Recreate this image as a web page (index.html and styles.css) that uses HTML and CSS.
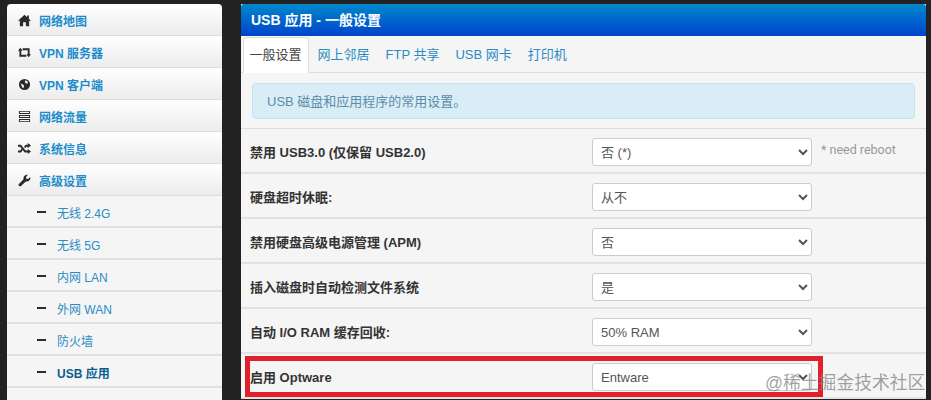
FILE: index.html
```html
<!DOCTYPE html>
<html lang="zh-CN">

<head>
    <meta charset="UTF-8">
    <title>USB 应用 - 一般设置</title>
    <link rel="stylesheet" href="styles.css">
</head>

<body>
    <div class="sidebar">
        <a class="nav-item" href="#">
            <svg class="nav-icon" viewBox="0 0 14 14"><path d="M7 .8 9.8 3.4V1.6h1.9v3.6L14 7.400H12V13.200H8.500V8.800H5.500V13.200H2V7.400H0Z" /></svg>
            网络地图
        </a>
        <a class="nav-item" href="#">
            <svg class="nav-icon" viewBox="0 0 14 14"><path d="M0 5 2.500 2 5 5H3.500V9.500H9V11.500H1.500V5ZM14 9 11.500 12 9 9H10.500V4.500H5V2.500H12.500V9Z" /></svg>
            VPN 服务器
        </a>
        <a class="nav-item" href="#">
            <svg class="nav-icon" viewBox="0 0 14 14"><path fill-rule="evenodd" d="M7 1a6 6 0 1 0 0 12A6 6 0 0 0 7 1ZM8 2.400 10.800 4 10 6.200 8.200 5.600 7.400 4ZM2.800 6 5 6.600 6.600 8.400 5.800 11 4.400 10 3.800 8Z" /></svg>
            VPN 客户端
        </a>
        <a class="nav-item" href="#">
            <svg class="nav-icon" viewBox="0 0 14 14"><path fill-rule="evenodd" d="M1 1H13V4.300H1ZM2 2V3.300H12V2ZM1 5.400H13V8.600H1ZM2 6.400V7.600H12V6.400ZM1 9.700H13V13H1ZM2 10.700V12H12V10.700Z" /></svg>
            网络流量
        </a>
        <a class="nav-item" href="#">
            <svg class="nav-icon" viewBox="0 0 14 14"><path d="M0 3H3.200L8.200 9.200H10.500V7.500L14 10.200 10.500 13V11.300H7.200L2.200 5.100H0ZM0 9.200H2.200L3.800 7.300 5.100 8.900 3.200 11.300H0ZM8.200 3H10.500V1.200L14 3.900 10.500 6.600V5.100H9.200L7.800 6.800 6.500 5.200Z" /></svg>
            系统信息
        </a>
        <a class="nav-item" href="#">
            <svg class="nav-icon" viewBox="0 0 14 14"><path d="M9.500.7a3.800 3.800 0 0 1 1.300.2L8.600 3.200 9 5 10.800 5.400 13.100 3.200A3.800 3.800 0 0 1 8.400 8L3 13.300H1.600L.7 12.400V11L6 5.600A3.800 3.800 0 0 1 9.500.7Z" /></svg>
            高级设置
        </a>
        <a class="sub-item" href="#"><span class="dash"></span>无线 2.4G</a>
        <a class="sub-item" href="#"><span class="dash"></span>无线 5G</a>
        <a class="sub-item" href="#"><span class="dash"></span>内网 LAN</a>
        <a class="sub-item" href="#"><span class="dash"></span>外网 WAN</a>
        <a class="sub-item" href="#"><span class="dash"></span>防火墙</a>
        <a class="sub-item active" href="#"><span class="dash"></span>USB 应用</a>
        <a class="sub-item" href="#"></a>
    </div>

    <div class="content">
        <div class="title">USB 应用 - 一般设置</div>

        <div class="tabs">
            <a class="tab active" href="#">一般设置</a>
            <a class="tab" href="#">网上邻居</a>
            <a class="tab" href="#">FTP 共享</a>
            <a class="tab" href="#">USB 网卡</a>
            <a class="tab" href="#">打印机</a>
        </div>

        <div class="alert-wrap">
            <div class="alert">USB 磁盘和应用程序的常用设置。</div>
        </div>

        <div class="row">
            <label>禁用 USB3.0 (仅保留 USB2.0)</label>
            <select><option>否 (*)</option></select>
            <span class="note">* need reboot</span>
        </div>
        <div class="row">
            <label>硬盘超时休眠:</label>
            <select><option>从不</option></select>
        </div>
        <div class="row">
            <label>禁用硬盘高级电源管理 (APM)</label>
            <select><option>否</option></select>
        </div>
        <div class="row">
            <label>插入磁盘时自动检测文件系统</label>
            <select><option>是</option></select>
        </div>
        <div class="row">
            <label>自动 I/O RAM 缓存回收:</label>
            <select><option>50% RAM</option></select>
        </div>
        <div class="row">
            <label>启用 Optware</label>
            <select><option>Entware</option></select>
        </div>
    </div>

    <div class="red-box"></div>
    <div class="watermark">@稀土掘金技术社区</div>
</body>

</html>
```

FILE: styles.css
```css
html {
    background-color: #222222;
    height: 400px;
    overflow: hidden;
}

body {
    margin: 0;
    padding: 4px 5px 0 7px;
    display: flex;
    gap: 19px;
    align-items: flex-start;
    font-family: "Liberation Sans", "Noto Sans CJK SC", sans-serif;
    font-size: 12px;
    color: #333333;
}

a {
    text-decoration: none;
}

.sidebar {
    width: 215px;
    flex: none;
    border-radius: 4px 4px 0 0;
    overflow: hidden;
}

.nav-item {
    height: 32px;
    box-sizing: border-box;
    display: flex;
    align-items: center;
    padding: 2px 0 0 11px;
    gap: 8px;
    font-weight: bold;
    color: #1c8ccb;
    background: linear-gradient(#ffffff, #ececec);
    border-bottom: 1px solid #dcdcdc;
}

.nav-icon {
    width: 13px;
    height: 13px;
    flex: none;
    fill: #2a2a2a;
}

.sub-item {
    height: 32px;
    box-sizing: border-box;
    display: flex;
    align-items: center;
    padding: 2px 0 0 30px;
    color: #2a8cc4;
    background-color: #f5f5f5;
    border-bottom: 2px solid #e0e0e0;
}

.sub-item.active {
    font-weight: bold;
    color: #0b5c8c;
}

.dash {
    width: 9px;
    height: 2px;
    margin-right: 11px;
    background-color: #2a2a2a;
}

.content {
    width: 685px;
    flex: none;
    background-color: #f5f5f5;
}

.title {
    height: 32px;
    box-sizing: border-box;
    padding: 5px 10px 0 10px;
    font-size: 14px;
    font-weight: bold;
    color: #ffffff;
    background: linear-gradient(#0088cc, #0044cc);
    border-radius: 3px 3px 0 0;
}

.tabs {
    height: 37px;
    box-sizing: border-box;
    display: flex;
    gap: 2px;
    padding: 1px 0 0 1.500px;
    border-bottom: 1px solid #dddddd;
}

.tab {
    height: 36px;
    box-sizing: border-box;
    padding: 6px 6px 0 6px;
    font-size: 13px;
    color: #2a8cc4;
    border: 1px solid transparent;
}

.tab.active {
    color: #444444;
    background-color: #ffffff;
    border-color: #dddddd;
    border-bottom-color: #ffffff;
    border-radius: 4px 4px 0 0;
}

.alert-wrap {
    height: 56px;
    box-sizing: border-box;
    padding: 10px 11px 0 11px;
    border-bottom: 1px solid #dddddd;
}

.alert {
    height: 36px;
    box-sizing: border-box;
    padding: 7px 14px 0 14px;
    font-size: 13px;
    color: #5b8cab;
    background-color: #d9edf7;
    border: 1px solid #c4e3f0;
    border-radius: 4px;
}

.row {
    height: 45px;
    box-sizing: border-box;
    display: flex;
    align-items: center;
    padding-left: 9px;
    padding-top: 3px;
    border-bottom: 2px solid #e2e2e2;
}

.row label {
    width: 342px;
    flex: none;
    font-size: 13px;
    font-weight: bold;
    margin-bottom: 2px;
}

.row select {
    width: 220px;
    height: 28px;
    flex: none;
    padding: 0 4px;
    font-family: inherit;
    font-size: 13px;
    color: #555555;
    background-color: #ffffff;
    border: 1px solid #cccccc;
    border-radius: 3px;
}

.note {
    margin-left: 9px;
    margin-bottom: 5px;
    font-family: Roboto, sans-serif;
    font-size: 12.500px;
    color: #999999;
}

.red-box {
    position: absolute;
    left: 245px;
    top: 356px;
    width: 568px;
    height: 31px;
    border: 5px solid #e2202c;
}

.watermark {
    position: absolute;
    left: 765px;
    top: 368px;
    font-size: 17.800px;
    color: rgba(130, 130, 130, 0.75);
    white-space: nowrap;
}
```
